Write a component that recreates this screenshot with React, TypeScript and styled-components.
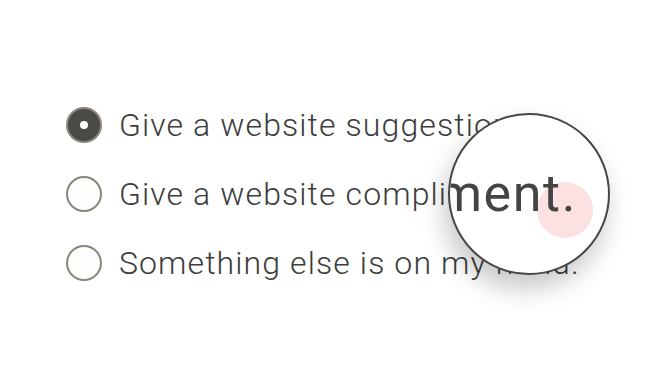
import React, { useState } from "react";
import styled, { createGlobalStyle } from "styled-components";

const GlobalStyle = createGlobalStyle`
  html, body {
    margin: 0;
    padding: 0;
    background: #ffffff;
  }
  body {
    font-family: Roboto, "Liberation Sans", sans-serif;
    color: #404040;
  }
`;

const Page = styled.main`
  position: relative;
  width: 658px;
  height: 370px;
  overflow: hidden;
  background: #ffffff;
`;

const OptionList = styled.ul`
  list-style: none;
  margin: 0;
  padding: 90px 0 0 66px;
  display: flex;
  flex-direction: column;
`;

const Option = styled.li`
  height: 69px;
  display: flex;
  align-items: center;
  gap: 17px;
  cursor: pointer;
`;

const Radio = styled.span<{ $checked?: boolean }>`
  box-sizing: border-box;
  flex: none;
  width: 36px;
  height: 36px;
  border-radius: 50%;
  border: 2px solid #8b867c;
  background: ${(p) => (p.$checked ? "#4b4a47" : "#fdfdfb")};
  display: grid;
  place-items: center;

  &::after {
    content: "";
    width: 8px;
    height: 8px;
    border-radius: 50%;
    background: #ffffff;
    display: ${(p) => (p.$checked ? "block" : "none")};
  }
`;

const Label = styled.span`
  font-size: 32px;
  line-height: 1;
  font-weight: 300;
  letter-spacing: 1.1px;
  color: #3d3d3c;
  white-space: nowrap;
`;

const Magnifier = styled.div`
  position: absolute;
  left: 448px;
  top: 113px;
  width: 162px;
  height: 162px;
  box-sizing: border-box;
  border-radius: 50%;
  border: 2px solid #474645;
  background: #ffffff;
  overflow: hidden;
  box-shadow: -4px 14px 26px rgba(0, 0, 0, 0.22);
`;

const Touch = styled.span`
  position: absolute;
  left: 87px;
  top: 67px;
  width: 56px;
  height: 56px;
  border-radius: 50%;
  background: #fbe1e1;
`;

const Zoomed = styled.span`
  position: absolute;
  right: 31px;
  top: 53px;
  font-size: 52px;
  line-height: 52px;
  font-weight: 400;
  letter-spacing: 1.6px;
  color: #444443;
  white-space: nowrap;
`;

const options = [
  "Give a website suggestion.",
  "Give a website compliment.",
  "Something else is on my mind.",
];

export default function App() {
  const [selected, setSelected] = useState(0);

  return (
    <Page>
      <GlobalStyle />
      <OptionList>
        {options.map((text, i) => (
          <Option key={text} onClick={() => setSelected(i)}>
            <Radio $checked={selected === i} />
            <Label>{text}</Label>
          </Option>
        ))}
      </OptionList>
      <Magnifier>
        <Touch />
        <Zoomed>{options[1]}</Zoomed>
      </Magnifier>
    </Page>
  );
}
